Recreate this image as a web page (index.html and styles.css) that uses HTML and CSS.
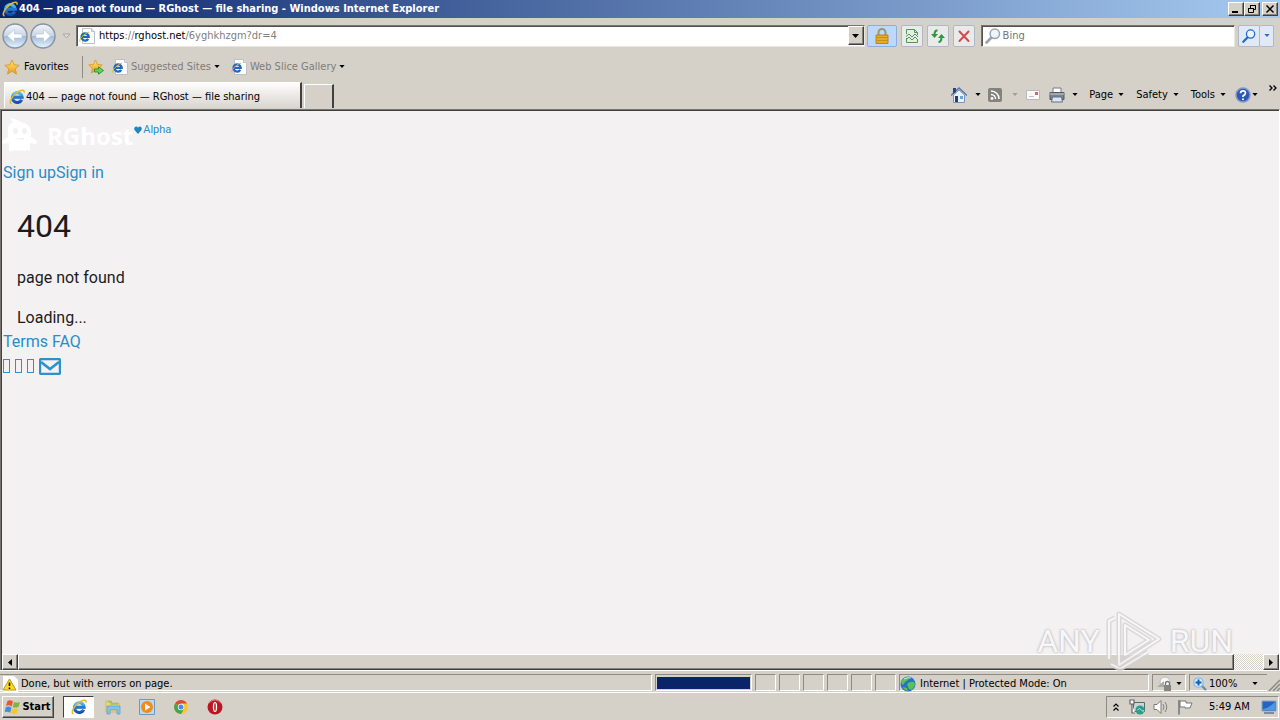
FILE: index.html
```
<!DOCTYPE html>
<html lang="en">
<head>
<meta charset="utf-8">
<title>404 — page not found — RGhost — file sharing</title>
<link rel="stylesheet" href="styles.css">
</head>
<body>
<svg class="defs" aria-hidden="true">
  <defs>
    <linearGradient id="blueg" x1="0" y1="0" x2="0" y2="1"><stop offset="0" stop-color="#4cc0f4"/><stop offset="1" stop-color="#124fae"/></linearGradient>
    <linearGradient id="goldg" x1="0" y1="0" x2="0" y2="1"><stop offset="0" stop-color="#ffe872"/><stop offset="1" stop-color="#f09a18"/></linearGradient>
    <linearGradient id="orb" x1="0" y1="0" x2="0" y2="1"><stop offset="0" stop-color="#f4f7fb"/><stop offset=".48" stop-color="#c9d5e3"/><stop offset=".52" stop-color="#a3bbd6"/><stop offset="1" stop-color="#e6f7ff"/></linearGradient>
    <symbol id="ie" viewBox="0 0 16 16"><path d="M12.700 10.800A4.900 4.900 0 1 1 13.200 8.200H4.200" fill="none" stroke="url(#blueg)" stroke-width="3.200"/><path d="M4 8.300h10" stroke="#2477cf" stroke-width="2.200"/><path d="M2.400 15C-.5 13.500 3.100 6.500 8.500 3 12.500.5 16 .3 14.900 3.800" fill="none" stroke="#e9b92c" stroke-width="1.500"/></symbol>
    <symbol id="iepage" viewBox="0 0 16 16"><path d="M3.500.5h9l3 3v12h-12z" fill="#fff" stroke="#b9c1cc"/><path d="M12.500.5v3h3" fill="#dde5ee" stroke="#b9c1cc"/><path d="M9.200 10.800A3.600 3.600 0 1 1 9.700 8.800H2.700" fill="none" stroke="#1c68c4" stroke-width="2.300"/><path d="M1 13.500C0 11 4 6.500 10 4" fill="none" stroke="#dfb02c"/></symbol>
    <symbol id="star" viewBox="0 0 16 16"><path d="M8 1l2.100 4.800 5.100.5-3.900 3.500 1.200 5.200L8 12.300 3.500 15l1.200-5.200L.8 6.300l5.100-.5z" fill="url(#goldg)" stroke="#d9982a" stroke-width=".9" stroke-linejoin="round"/></symbol>
    <symbol id="lens" viewBox="0 0 16 16"><path d="M6.500 9.500L1.500 14.500" stroke="currentColor" stroke-width="2.600" stroke-linecap="round"/><circle cx="9.800" cy="5.800" r="4.700" fill="#eef6fd" stroke="currentColor" stroke-width="1.500"/></symbol>
    <symbol id="down" viewBox="0 0 7 4"><path d="M0 0h7L3.500 4z" fill="currentColor"/></symbol>
  </defs>
</svg>

<header class="titlebar">
  <svg class="i16"><use href="#ie"/></svg>
  <span class="title">404 — page not found — RGhost — file sharing - Windows Internet Explorer</span>
  <div class="winbtns">
    <button class="winbtn" aria-label="Minimize"><svg viewBox="0 0 12 10"><path d="M2 8h6" stroke="#000" stroke-width="2"/></svg></button>
    <button class="winbtn" aria-label="Restore"><svg viewBox="0 0 12 10"><path d="M4.500 4V1.500h5v4H8M4 1.500h6M2.500 4.500h5v4h-5zM2 4.500h6" fill="none" stroke="#000"/></svg></button>
    <button class="winbtn close" aria-label="Close"><svg viewBox="0 0 12 10"><path d="M2.500 1.500l7 7M9.500 1.500l-7 7" stroke="#000" stroke-width="1.500"/></svg></button>
  </div>
</header>

<nav class="navrow" aria-label="Navigation">
  <div class="travel">
    <button class="plain" aria-label="Back"><svg class="orb" viewBox="0 0 26 26"><circle cx="13" cy="13" r="12" fill="url(#orb)" stroke="#8492a8" stroke-width="1.400"/><path d="M5.500 13l7-6.500V11h7.500v4h-7.500v4.500z" fill="#fff" stroke="#b1c6dc" stroke-width=".6"/></svg></button>
    <button class="plain" aria-label="Forward"><svg class="orb" viewBox="0 0 26 26"><circle cx="13" cy="13" r="12" fill="url(#orb)" stroke="#8492a8" stroke-width="1.400"/><path d="M20.500 13l-7-6.500V11H6v4h7.500v4.500z" fill="#fff" stroke="#b1c6dc" stroke-width=".6"/></svg></button>
  </div>
  <button class="plain recent" aria-label="Recent pages"><svg viewBox="0 0 9 6"><path d="M1 1h7L4.500 5z" fill="#e3dfd8" stroke="#aaa69e"/></svg></button>
  <div class="address">
    <svg class="i16"><use href="#iepage"/></svg>
    <div class="url" role="textbox" aria-label="Address" contenteditable="true" spellcheck="false">https<i>://</i>rghost.net<i>/6yghkhzgm?dr=4</i></div>
    <button class="raised" aria-label="Show addresses"><svg class="down"><use href="#down"/></svg></button>
  </div>
  <button class="tool lock" aria-label="Security report"><svg class="i16" viewBox="0 0 16 16"><path d="M4.500 8V4.500a3.500 3.500 0 0 1 7 0V8" fill="none" stroke="#a39469" stroke-width="2"/><path d="M2 7h12v8.500H2z" fill="#e5ad20" stroke="#a87812" stroke-width=".8"/><path d="M2 9.500h12M2 12.500h12" stroke="#c98f18"/></svg></button>
  <button class="tool" aria-label="Compatibility view"><svg class="i16" viewBox="0 0 16 16"><path d="M2.500 6V1.500h8l3 3V7M2.500 10v4.500h11V11M10.500 1.500v3h3" fill="none" stroke="#4c9a50"/><path d="M2 8.500l3-2.500 3 3 3-3 3 3M2 12l3-3 3 3 3-3 3 3" fill="none" stroke="#4c9a50"/></svg></button>
  <button class="tool" aria-label="Refresh"><svg class="i16" viewBox="0 0 16 16"><path d="M7.500 2.500Q4.500 2 4.500 7" fill="none" stroke="#2d973a" stroke-width="2"/><path d="M1 6h7l-3.500 4z" fill="#2d973a"/><path d="M8.500 14Q11.500 14 11.500 9" fill="none" stroke="#2d973a" stroke-width="2"/><path d="M8 10h7l-3.500-4z" fill="#2d973a"/></svg></button>
  <button class="tool" aria-label="Stop"><svg class="i16" viewBox="0 0 16 16"><path d="M3.500 3.500l9 9.500M12.500 3.500l-9 9.500" stroke="#cf4b4f" stroke-width="2" stroke-linecap="round"/></svg></button>
  <div class="search">
    <svg class="i16 gray"><use href="#lens"/></svg>
    <input type="text" placeholder="Bing" aria-label="Search">
  </div>
  <div class="go">
    <button class="tool golens" aria-label="Search the web"><svg class="i14"><use href="#lens"/></svg></button>
    <button class="tool godown" aria-label="Search options"><svg class="down small"><use href="#down"/></svg></button>
  </div>
</nav>

<div class="favrow">
  <button class="plain fav"><svg class="i16"><use href="#star"/></svg>Favorites</button>
  <button class="plain addfav" aria-label="Add to Favorites Bar"><svg class="i16" viewBox="0 0 16 16"><use href="#star" width="15" height="15"/><path d="M6.500 10h4V7.800l5 3.700-5 3.700V13h-4z" fill="#6fd04a" stroke="#22902b" stroke-width=".9"/></svg></button>
  <button class="plain dim"><svg class="i16"><use href="#iepage"/></svg>Suggested Sites<svg class="down small"><use href="#down"/></svg></button>
  <button class="plain dim"><svg class="i16"><use href="#iepage"/></svg>Web Slice Gallery<svg class="down small"><use href="#down"/></svg></button>
</div>

<div class="tabrow">
  <button class="tab"><svg class="i16"><use href="#ie"/></svg>404 — page not found — RGhost — file sharing</button>
  <button class="newtab" aria-label="New tab"></button>
  <div class="cmds">
    <button class="plain" aria-label="Home"><svg class="i16" viewBox="0 0 16 16"><path d="M2.500 8v7.500h11V8L8 3z" fill="#e9f1fb" stroke="#7d93b8"/><path d="M0 8.500L8 1l8 7.500" fill="none" stroke="#5878ac" stroke-width="1.500"/><path d="M2 1h3v4L2 7z" fill="#27458b"/><path d="M4 9h3v6H4z" fill="#223c86"/><path d="M9 9h3v3H9z" fill="#6ba3dc"/></svg><svg class="down small"><use href="#down"/></svg></button>
    <button class="plain feed" aria-label="Feeds"><svg class="i14" viewBox="0 0 14 14"><rect width="14" height="14" rx="2" fill="#85827e"/><circle cx="4" cy="10.500" r="1.400" fill="#fff"/><path d="M3 6.500a4.500 4.500 0 0 1 4.500 4.500M3 3a8 8 0 0 1 8 8" fill="none" stroke="#fff" stroke-width="1.500"/></svg><svg class="down small faded"><use href="#down"/></svg></button>
    <button class="plain mail" aria-label="Read mail"><svg class="i14" viewBox="0 0 14 14"><path d="M.5 2.500h13v9H.5z" fill="#fcf9f7" stroke="#bbb8ba"/><path d="M9 4h3v3H9z" fill="#c96878"/><path d="M3 8.500h5" stroke="#bec1cb"/></svg></button>
    <button class="plain print" aria-label="Print"><svg class="i16" viewBox="0 0 16 16"><path d="M4 1h8v5H4z" fill="#fff" stroke="#767b86"/><path d="M1 5.500h14v7H1z" fill="#7b838e" stroke="#535961"/><path d="M1 7h14" stroke="#c7cdd6"/><path d="M3.500 10h9l1 5h-11z" fill="#d7e7fb" stroke="#697180"/></svg><svg class="down small"><use href="#down"/></svg></button>
    <button class="plain page">Page<svg class="down small"><use href="#down"/></svg></button>
    <button class="plain safety">Safety<svg class="down small"><use href="#down"/></svg></button>
    <button class="plain tools">Tools<svg class="down small"><use href="#down"/></svg></button>
    <button class="plain help" aria-label="Help"><svg class="i16" viewBox="0 0 16 16"><circle cx="8" cy="8" r="7" fill="#2e58b5" stroke="#8199c9" stroke-width="1.500"/><path d="M5.500 6.200Q5.500 3.800 8 3.800t2.500 2.200Q10.500 7.500 8 9v1" fill="none" stroke="#fff" stroke-width="1.700"/><circle cx="8" cy="12.200" r="1" fill="#fff"/></svg><svg class="down small"><use href="#down"/></svg></button>
    <button class="plain more" aria-label="More"><svg viewBox="0 0 8 6"><path d="M.5.5L3 3 .5 5.500M4.500.5L7 3 4.500 5.500" fill="none" stroke="#000" stroke-width="1.300"/></svg></button>
  </div>
</div>

<div class="view">
  <main class="site-page">
    <div class="brand">
      <svg class="ghost" viewBox="0 0 36 34"><path fill-rule="evenodd" d="M7 33V25L1 26 0 23l6-4V12Q6 6 11 4.500L8 0q8 2 11 4 9 2 10 9v6l6 4-1 3-6-1v8l-3-1-3 1-3-1-3 1-3-1-3 1zM11 13a2.500 3 0 1 0 5 0 2.500 3 0 1 0-5 0zM20 13a2.500 3 0 1 0 5 0 2.500 3 0 1 0-5 0zM15 20h7v1.500h-7z" fill="#fff"/></svg>
      <a class="name" href="#">RGhost</a>
      <a class="alpha" href="#"><svg viewBox="0 0 8 8"><path d="M4 8L.5 4Q-.5 1 2 .5 3.300.4 4 1.700 4.700.4 6 .5 8.500 1 7.500 4z" fill="#1f86bd"/></svg>Alpha</a>
    </div>
    <div class="line"><a href="#">Sign up</a><a href="#">Sign in</a></div>
    <div class="message">
      <h1>404</h1>
      <p>page not found</p>
      <div>Loading...</div>
    </div>
    <div class="line"><a href="#">Terms</a> <a href="#">FAQ</a></div>
    <div class="line social">
      <a href="#" aria-label="Twitter"><span class="box"></span></a>
      <a href="#" aria-label="Facebook"><span class="box"></span></a>
      <a href="#" aria-label="VK"><span class="box"></span></a>
      <a href="#" aria-label="Mail"><svg viewBox="0 0 22 17"><rect x="1" y="1" width="20" height="15" rx="1.500" fill="none" stroke="#2f91cb" stroke-width="2.400"/><path d="M2 4l9 7 9-7" fill="none" stroke="#2f91cb" stroke-width="2.600"/></svg></a>
    </div>
  </main>
  <div class="hscroll">
    <button class="raised" aria-label="Scroll left"><svg viewBox="0 0 4 7"><path d="M4 0v7L0 3.500z"/></svg></button>
    <div class="thumb"></div>
    <div class="track"></div>
    <button class="raised" aria-label="Scroll right"><svg viewBox="0 0 4 7"><path d="M0 0v7l4-3.500z"/></svg></button>
  </div>
  <div class="mark">
    <span>ANY</span>
    <svg viewBox="0 0 60 64"><g fill="none" stroke-linejoin="round"><path d="M14 5l40 25-40 26zM20 16l24 15-24 15zM4 50V12l6-3M6 55l9 5 28-17" stroke="#d5d3d5" stroke-width="5"/><path d="M14 5l40 25-40 26zM20 16l24 15-24 15zM4 50V12l6-3M6 55l9 5 28-17" stroke="#faf9fa" stroke-width="2"/></g></svg>
    <span>RUN</span>
  </div>
</div>

<footer class="status">
  <div class="panel done"><svg class="i16" viewBox="0 0 16 16"><path d="M1 0h11l4 4v12H1z" fill="#fff"/><path d="M7.500 3l6.500 11H1z" fill="#fbdc20" stroke="#b79a16" stroke-linejoin="round"/><path d="M7.500 6.500V10M7.500 11.500V13" stroke="#111" stroke-width="1.600"/></svg>Done, but with errors on page.</div>
  <div class="panel progress" role="progressbar" aria-label="Loading"><div class="bar"></div></div>
  <div class="panel cell"></div><div class="panel cell"></div><div class="panel cell"></div>
  <div class="panel cell"></div><div class="panel cell"></div><div class="panel cell"></div>
  <div class="panel zone"><svg class="i16" viewBox="0 0 16 16"><circle cx="8" cy="8" r="7.500" fill="#2672c8"/><path d="M2 4q4-5 8-3L8 4 5 6 3 9 1 7zM7 8q3-3 7-2l1 3-3 5-3-1zM3 11l4 1 1 3q-4-1-5-4z" fill="#5cc250"/><path d="M4 3q4-2 7-1" stroke="#bdeaf6" fill="none"/></svg>Internet | Protected Mode: On</div>
  <div class="panel privacy"><svg class="i16" viewBox="0 0 16 16"><circle cx="9" cy="6" r="5" fill="#f7f7f5" stroke="#bbb"/><path d="M1 11l7-6v6z" fill="#aaa9a5"/><path d="M8 9h7v6H8z" fill="#85847f"/><path d="M9.500 9V7.500a2 2 0 0 1 4 0V9" fill="none" stroke="#777" stroke-width="1.300"/></svg><svg class="down small"><use href="#down"/></svg></div>
  <div class="panel zoom"><svg class="i14" viewBox="0 0 14 14"><path d="M8 8l5 5" stroke="#6f8aaf" stroke-width="2.400"/><circle cx="5.500" cy="5.500" r="4.700" fill="#d9edff" stroke="#8ab8e4" stroke-width="1.200"/><path d="M2.500 5.500h6M5.500 2.500v6" stroke="#155bb8" stroke-width="2"/></svg><span>100%</span><svg class="down small"><use href="#down"/></svg></div>
  <svg class="grip" viewBox="0 0 12 12"><path d="M1 12L12 1M5 12l7-7M9 12l3-3" stroke="#8b8880" stroke-width="1.500"/></svg>
</footer>

<div class="taskbar">
  <button class="start"><svg class="i16" viewBox="0 0 16 16"><path d="M2.500 2Q5 .5 8 2.500L6.700 7.500Q4 5.500 1 7z" fill="#e8582c"/><path d="M9 3q3 1.500 6 0l-1.500 5Q10 9 7.800 8z" fill="#78b83c"/><path d="M.8 8.200q3-1.500 5.700.5l-1.300 5Q2.500 12-.4 13.200z" fill="#3f8ee0"/><path d="M7.500 9.200q2.500 1 5.700 0l-1.400 5Q9 15.500 6.200 14z" fill="#f6c62c"/></svg>Start</button>
  <div class="launch">
    <button class="task active" aria-label="Internet Explorer"><svg class="i16"><use href="#ie"/></svg></button>
    <button class="task" aria-label="Explorer"><svg class="i16" viewBox="0 0 16 16"><path d="M1 2h5l1 2h7v9H1z" fill="#f2d778" stroke="#cfae4e" stroke-width=".7"/><path d="M3 3h4M5 5h8" stroke="#66b96b"/><path d="M2 7h13v8h-3v-4H5v4H2z" fill="#83c3eb" stroke="#5a9bc8" stroke-width=".7"/></svg></button>
    <button class="task" aria-label="Media Player"><svg class="i16" viewBox="0 0 16 16"><path d="M.5.500h15v15H.5z" fill="#b7d9f4" stroke="#609ccc"/><circle cx="8" cy="8" r="6" fill="#f28a1c"/><path d="M6 4.500v7L11.500 8z" fill="#fff"/></svg></button>
    <button class="task" aria-label="Chrome"><svg class="i14" viewBox="0 0 14 14"><circle cx="7" cy="7" r="7" fill="#f6c932"/><path d="M7 7L1 3.500A7 7 0 0 1 13 3.500H7z" fill="#df4938"/><path d="M7 7L1 3.500A7 7 0 0 0 7 14l3-5z" fill="#43a552"/><circle cx="7" cy="7" r="3.200" fill="#fff"/><circle cx="7" cy="7" r="2.500" fill="#468bea"/></svg></button>
    <button class="task" aria-label="Opera"><svg class="i16" viewBox="0 0 16 16"><circle cx="8" cy="8" r="7.500" fill="#b91620"/><path d="M2 4q6-6 12 0" stroke="#e2777c" fill="none"/><ellipse cx="8" cy="8" rx="2.200" ry="5" fill="#fff"/><ellipse cx="8" cy="8" rx=".8" ry="4" fill="#b91620"/></svg></button>
  </div>
  <div class="tray">
    <svg class="chev" viewBox="0 0 6 8"><path d="M.5 3.500L3 1l2.500 2.500M.5 7.500L3 5l2.500 2.500" fill="none" stroke="#000" stroke-width="1.200"/></svg>
    <svg class="i16 net" viewBox="0 0 16 16"><path d="M4.500 3.500h11v9h-11z" fill="#c5dad8" stroke="#5c6a6b"/><path d="M1 1h4v4H1zM3 5v9h3" fill="#fff" stroke="#666" stroke-width="1.200"/><circle cx="11" cy="11" r="4.500" fill="#2f9c8b"/><path d="M8.500 11q2-3 4 0t2 0" stroke="#b5ecdc" fill="none"/></svg>
    <svg class="i16 snd" viewBox="0 0 16 16"><path d="M1 5.500h3L8 1.500v13l-4-4H1z" fill="#fff" stroke="#7b7974"/><path d="M10 5q2 3 0 6M12 3q3.500 5 0 10" fill="none" stroke="#85837e"/></svg>
    <svg class="i16 flag" viewBox="0 0 16 16"><path d="M2 1v14.500" stroke="#777" stroke-width="1.600"/><path d="M3 2h6v2h6l-2 5H8V8H3z" fill="#fff" stroke="#777"/></svg>
    <time>5:49 AM</time>
    <svg class="desk" viewBox="0 0 16 14"><path d="M1 1h14v10H1z" fill="#2265c4" stroke="#8fa5be"/><path d="M2 9q6-1 12-7v8H2z" fill="#4a98e6"/><path d="M3 13h10" stroke="#33445f"/></svg>
  </div>
</div>
</body>
</html>
```
FILE: styles.css
```
* { box-sizing: border-box; }
body {
  margin: 0;
  height: 100vh;
  display: flex;
  flex-direction: column;
  overflow: hidden;
  background: #d5d0c8;
  color: #000;
  font: 11px/14px "DejaVu Sans Condensed", "DejaVu Sans", sans-serif;
}
button, input { font: inherit; color: inherit; margin: 0; padding: 0; }
svg { display: block; flex: none; }
a { color: #2a8dc5; text-decoration: none; }
.defs { position: absolute; width: 0; height: 0; }
.i14 { width: 14px; height: 14px; }
.i16 { width: 16px; height: 16px; }
.down { width: 7px; height: 4px; }
.small { width: 6px; height: 3px; color: #000; }
.gray { color: #9aa3af; }
.plain { display: flex; align-items: center; border: 0; background: none; white-space: nowrap; }
.raised, .winbtn, .start {
  display: flex;
  align-items: center;
  justify-content: center;
  background: #d5d0c8;
  border: 1px solid;
  border-color: #fff #404040 #404040 #fff;
  box-shadow: inset -1px -1px #85827c;
}

/* title bar */
.titlebar {
  display: flex;
  align-items: center;
  height: 18px;
  padding: 0 2px;
  background: linear-gradient(90deg, #0a246a, #a6caf0);
  color: #fff;
  font-weight: bold;
}
.title { flex: 1; padding-left: 1px; white-space: nowrap; overflow: hidden; }
.winbtns { display: flex; }
.winbtn { width: 16px; height: 14px; }
.winbtn svg { width: 12px; height: 10px; }
.close { margin-left: 2px; }

/* navigation row */
.navrow { display: flex; align-items: center; height: 35px; padding: 0 6px 0 2px; }
.travel { display: flex; gap: 2px; }
.orb { width: 26px; height: 26px; }
.recent { width: 20px; justify-content: center; }
.recent svg { width: 9px; height: 6px; }
.address, .search {
  display: flex;
  align-items: center;
  height: 22px;
  background: #fff;
  border: 1px solid;
  border-color: #77746f #e9e6e0 #e9e6e0 #77746f;
  box-shadow: inset 1px 1px #55524e;
}
.address { flex: 1; padding-left: 2px; }
.url { flex: 1; padding-left: 4px; white-space: nowrap; outline: 0; }
.url i { font-style: normal; color: #808080; }
.address .raised { width: 16px; height: 19px; }
.tool {
  display: flex;
  align-items: center;
  justify-content: center;
  width: 22px;
  height: 22px;
  margin-left: 4px;
  border: 1px solid #b1b8c5;
  border-radius: 2px;
  background: #e9ebea;
}
.lock { width: 30px; margin-left: 2px; background: #bed8fb; border-color: #8caedb; }
.search { width: 20%; margin-left: 6px; padding-left: 3px; }
.search input { flex: 1; min-width: 0; border: 0; padding-left: 2px; outline: 0; background: none; }
.search input::placeholder { color: #77746f; opacity: 1; }
.go { display: flex; margin-left: 3px; }
.go .tool { margin: 0; background: #e1e9f6; color: #2769ce; }
.go .golens { border-radius: 2px 0 0 2px; }
.go .godown { width: 14px; border-left: 0; }
.godown .small { color: #2769ce; }

/* favorites row */
.favrow { display: flex; align-items: center; height: 27px; padding-left: 4px; }
.fav { gap: 4px; width: 79px; height: 22px; border-right: 1px solid #8e8a84; }
.addfav { margin-left: 5px; }
.dim { color: #807d78; gap: 3px; margin-left: 8px; }
.dim + .dim { margin-left: 11px; }

/* tab row */
.tabrow { display: flex; align-items: flex-end; height: 29px; padding: 0 3px 1px 4px; }
.tab, .newtab { border: 1px solid; border-color: #fff #404040 transparent #fff; border-bottom: 0; }
.tab {
  display: flex;
  align-items: center;
  gap: 1px;
  width: 298px;
  height: 26px;
  padding: 2px 0 0 4px;
  background: linear-gradient(#fdfdfc, #d9d5cf);
  border-right-width: 2px;
  white-space: nowrap;
}
.newtab { width: 30px; height: 24px; margin-left: 2px; background: #d5d0c8; border-right-width: 2px; }
.cmds { display: flex; align-items: center; height: 27px; margin-left: auto; }
.cmds .plain { gap: 5px; }
.cmds .plain:first-child { gap: 8px; }
.cmds .feed { gap: 10px; margin-left: 7px; }
.cmds .faded { color: #a09d97; }
.cmds .mail { margin-left: 8px; }
.cmds .print { gap: 7px; margin-left: 9px; }
.cmds .page { margin-left: 11px; }
.cmds .safety, .cmds .tools { margin-left: 12px; }
.cmds .help { gap: 1px; margin-left: 9px; }
.cmds .more { align-self: flex-start; margin: 4px 0 0 11px; }
.more svg { width: 8px; height: 6px; }

/* page view */
.view {
  position: relative;
  flex: 1;
  min-height: 0;
  display: flex;
  flex-direction: column;
  border: 1px solid;
  border-color: #77746f #fff #404040 #77746f;
  border-bottom: 0;
  box-shadow: inset 1px 1px #404040;
  padding: 2px 0 0 1px;
  background: #f4f1f3;
}
.site-page { flex: 1; min-height: 0; overflow: hidden; font: 16px/24px Roboto, sans-serif; color: #1c1c1c; }
.brand { display: flex; align-items: flex-start; height: 49px; padding-top: 6px; }
.ghost { width: 36px; height: 34px; }
.name { margin: 6px 0 0 9px; font: bold 24px/24px "Open Sans", sans-serif; color: #fff; }
.alpha { display: flex; align-items: center; gap: 1px; margin-left: 1px; font-size: 11px; line-height: 24px; }
.alpha svg { width: 8px; height: 8px; }
.line { height: 24px; padding-left: 1px; }
.message { padding: 21px 15px 0; }
.message h1 { margin: 0 0 20px; font-size: 32px; line-height: 40px; font-weight: normal; }
.message p { margin: 0 0 16px; }
.social { display: flex; align-items: center; gap: 4px; }
.social svg { width: 22px; height: 17px; }
.box { display: block; width: 7px; height: 14px; border: 1px solid #2f91cb; margin-right: 1px; }
.hscroll { display: flex; height: 16px; }
.hscroll .raised { width: 16px; }
.hscroll .raised svg { width: 4px; height: 7px; }
.thumb {
  flex: 1;
  background: #d5d0c8;
  border: 1px solid;
  border-color: #fff #404040 #404040 #fff;
  box-shadow: inset -1px -1px #85827c;
}
.track { width: 29px; background: repeating-conic-gradient(#fff 0 25%, #d5d0c8 0 50%) 0 0 / 2px 2px; }
.mark {
  position: absolute;
  right: 46px;
  bottom: -3px;
  display: flex;
  align-items: center;
  gap: 5px;
  color: #f9f8f9;
  font: 32px/64px Roboto, sans-serif;
  text-shadow: 0 0 2px #aaa8aa, 0 0 3px #bbb;
  opacity: .8;
  pointer-events: none;
}
.mark svg { width: 60px; height: 64px; }

/* status bar */
.status { display: flex; gap: 3px; height: 23px; padding: 3px 0 1px; border-top: 1px solid #fff; border-bottom: 1px solid #fff; }
.panel {
  display: flex;
  align-items: center;
  padding-top: 2px;
  border: 1px solid;
  border-color: #8e8a84 #fff #fff #8e8a84;
  white-space: nowrap;
}
.done { flex: 1; gap: 3px; padding-left: 2px; border-left: 0; }
.progress { width: 97px; padding: 2px 1px; }
.bar { flex: 1; height: 12px; background: #0a246a; }
.cell { width: 21px; }
.zone { width: 250px; gap: 4px; }
.privacy { width: 34px; gap: 4px; padding-left: 3px; }
.zoom { width: 78px; margin-right: -2px; gap: 2px; padding-left: 3px; border-right: 0; }
.zoom .down { margin-left: 13px; }
.grip { width: 12px; height: 12px; align-self: flex-end; }

/* taskbar */
.taskbar { display: flex; align-items: center; height: 27px; padding: 1px 1px 0 2px; }
.start { gap: 1px; width: 52px; height: 22px; font-weight: bold; }
.launch { display: flex; align-items: center; gap: 3px; margin-left: 9px; }
.task { display: flex; align-items: center; justify-content: center; width: 31px; height: 22px; border: 0; background: none; }
.active { background: #fff; border: 1px solid; border-color: #404040 #fff #fff #404040; }
.tray {
  display: flex;
  align-items: center;
  height: 22px;
  width: 173px;
  margin-left: auto;
  padding: 0 1px 0 6px;
  border: 1px solid;
  border-color: #8e8a84 #fff #fff #8e8a84;
}
.chev { width: 6px; height: 8px; }
.net { margin-left: 10px; }
.snd, .flag { margin-left: 8px; }
.tray time { margin-left: 16px; white-space: nowrap; }
.desk { width: 16px; height: 14px; margin-left: auto; }
```
